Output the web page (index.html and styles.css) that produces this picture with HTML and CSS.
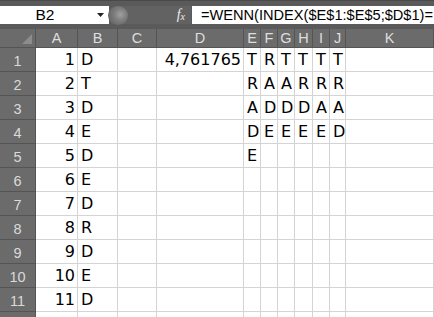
FILE: index.html
```html
<!DOCTYPE html>
<html>
<head>
<meta charset="utf-8">
<link rel="stylesheet" href="styles.css">
</head>
<body>
<div class="app">
  <div class="toolbar">
    <div class="namebox">
      <span class="name">B2</span>
      <svg class="arrow" width="7" height="4" viewBox="0 0 7 4"><path d="M0 0H7L3.5 4Z" fill="#222"/></svg>
    </div>
    <div class="pill">
      <span class="knob"></span>
      <span class="fx">f<sub>x</sub></span>
    </div>
    <div class="formula">=WENN(INDEX($E$1:$E$5;$D$1)=</div>
  </div>
  <div class="grid">
    <div class="hd corner"><span class="tri"></span></div>
    <div class="hd">A</div><div class="hd">B</div><div class="hd">C</div><div class="hd">D</div>
    <div class="hd">E</div><div class="hd">F</div><div class="hd">G</div><div class="hd">H</div>
    <div class="hd">I</div><div class="hd">J</div><div class="hd">K</div>

    <div class="rh">1</div><div class="c n">1</div><div class="c">D</div><div class="c"></div><div class="c n">4,761765</div><div class="c">T</div><div class="c">R</div><div class="c">T</div><div class="c">T</div><div class="c">T</div><div class="c">T</div><div class="c"></div>
    <div class="rh">2</div><div class="c n">2</div><div class="c">T</div><div class="c"></div><div class="c"></div><div class="c">R</div><div class="c">A</div><div class="c">A</div><div class="c">R</div><div class="c">R</div><div class="c">R</div><div class="c"></div>
    <div class="rh">3</div><div class="c n">3</div><div class="c">D</div><div class="c"></div><div class="c"></div><div class="c">A</div><div class="c">D</div><div class="c">D</div><div class="c">D</div><div class="c">A</div><div class="c">A</div><div class="c"></div>
    <div class="rh">4</div><div class="c n">4</div><div class="c">E</div><div class="c"></div><div class="c"></div><div class="c">D</div><div class="c">E</div><div class="c">E</div><div class="c">E</div><div class="c">E</div><div class="c">D</div><div class="c"></div>
    <div class="rh">5</div><div class="c n">5</div><div class="c">D</div><div class="c"></div><div class="c"></div><div class="c">E</div><div class="c"></div><div class="c"></div><div class="c"></div><div class="c"></div><div class="c"></div><div class="c"></div>
    <div class="rh">6</div><div class="c n">6</div><div class="c">E</div><div class="c"></div><div class="c"></div><div class="c"></div><div class="c"></div><div class="c"></div><div class="c"></div><div class="c"></div><div class="c"></div><div class="c"></div>
    <div class="rh">7</div><div class="c n">7</div><div class="c">D</div><div class="c"></div><div class="c"></div><div class="c"></div><div class="c"></div><div class="c"></div><div class="c"></div><div class="c"></div><div class="c"></div><div class="c"></div>
    <div class="rh">8</div><div class="c n">8</div><div class="c">R</div><div class="c"></div><div class="c"></div><div class="c"></div><div class="c"></div><div class="c"></div><div class="c"></div><div class="c"></div><div class="c"></div><div class="c"></div>
    <div class="rh">9</div><div class="c n">9</div><div class="c">D</div><div class="c"></div><div class="c"></div><div class="c"></div><div class="c"></div><div class="c"></div><div class="c"></div><div class="c"></div><div class="c"></div><div class="c"></div>
    <div class="rh">10</div><div class="c n">10</div><div class="c">E</div><div class="c"></div><div class="c"></div><div class="c"></div><div class="c"></div><div class="c"></div><div class="c"></div><div class="c"></div><div class="c"></div><div class="c"></div>
    <div class="rh">11</div><div class="c n">11</div><div class="c">D</div><div class="c"></div><div class="c"></div><div class="c"></div><div class="c"></div><div class="c"></div><div class="c"></div><div class="c"></div><div class="c"></div><div class="c"></div>
    <div class="rh"></div><div class="c"></div><div class="c"></div><div class="c"></div><div class="c"></div><div class="c"></div><div class="c"></div><div class="c"></div><div class="c"></div><div class="c"></div><div class="c"></div><div class="c"></div>
  </div>
</div>
</body>
</html>
```
FILE: styles.css
```css
html, body {
  margin: 0;
  padding: 0;
  overflow: hidden;
  background: #fff;
}
.app {
  width: 434px;
  height: 317px;
  overflow: hidden;
}
.toolbar {
  display: flex;
  height: 29px;
  box-sizing: border-box;
  padding: 5px 0 5px 0;
  background: #5a5a5a;
  border-top: 1px solid #4a4a4a;
}
.namebox {
  flex: 0 0 109px;
  background: #fff;
  display: flex;
  align-items: center;
  font-family: "Liberation Sans", Arial, sans-serif;
  font-size: 15.5px;
  color: #000;
}
.name {
  width: 90px;
  text-align: center;
}
.arrow {
  margin-left: 7px;
}
.pill {
  flex: 0 0 82px;
  background: #626262;
  display: flex;
  align-items: center;
  justify-content: space-between;
  border-radius: 10px 0 0 10px;
}
.knob {
  width: 20px;
  height: 19px;
  border-radius: 50%;
  background: radial-gradient(circle at 62% 45%, #a0a0a0 0, #7c7c7c 40%, #5a5a5a 100%);
  margin-left: -1px;
}
.fx {
  font-family: "Liberation Serif", serif;
  font-style: italic;
  font-size: 14px;
  color: #eee;
  margin-right: 6px;
  line-height: 1;
}
.fx sub {
  font-size: 10px;
  vertical-align: -1px;
}
.formula {
  flex: 1;
  background: #fff;
  margin-left: 1px;
  padding-left: 9px;
  display: flex;
  align-items: center;
  white-space: nowrap;
  overflow: hidden;
  font-family: "Liberation Sans", Arial, sans-serif;
  font-size: 14.6px;
  color: #000;
}
.grid {
  display: grid;
  grid-template-columns: 36px 42px 40px 39px 87px 17px 17px 17px 18px 17px 16px 88px;
  grid-template-rows: 19px repeat(12, 24px);
}
.hd {
  background: #6b6b6b;
  color: #dedede;
  border-right: 1px solid #545454;
  border-bottom: 1px solid #545454;
  box-sizing: border-box;
  display: flex;
  align-items: center;
  justify-content: center;
  font-family: "Liberation Sans", Arial, sans-serif;
  font-size: 14.5px;
}
.corner {
  position: relative;
}
.tri {
  position: absolute;
  right: 3px;
  bottom: 3px;
  width: 0;
  height: 0;
  border-left: 10px solid transparent;
  border-bottom: 10px solid #8c8c8c;
}
.rh {
  background: #6b6b6b;
  color: #dadada;
  border-bottom: 1px solid #545454;
  border-right: 1px solid #545454;
  box-sizing: border-box;
  display: flex;
  align-items: center;
  justify-content: center;
  font-family: "Liberation Sans", Arial, sans-serif;
  font-size: 14.5px;
  padding-top: 2px;
}
.c {
  border-right: 1px solid #d4d4d4;
  border-bottom: 1px solid #d4d4d4;
  box-sizing: border-box;
  display: flex;
  align-items: flex-end;
  padding: 0 3px 3px 3px;
  font-family: "DejaVu Sans", sans-serif;
  font-size: 16px;
  line-height: 17px;
  color: #000;
  white-space: nowrap;
  overflow: hidden;
}
.n {
  justify-content: flex-end;
  padding-right: 2px;
}
```
